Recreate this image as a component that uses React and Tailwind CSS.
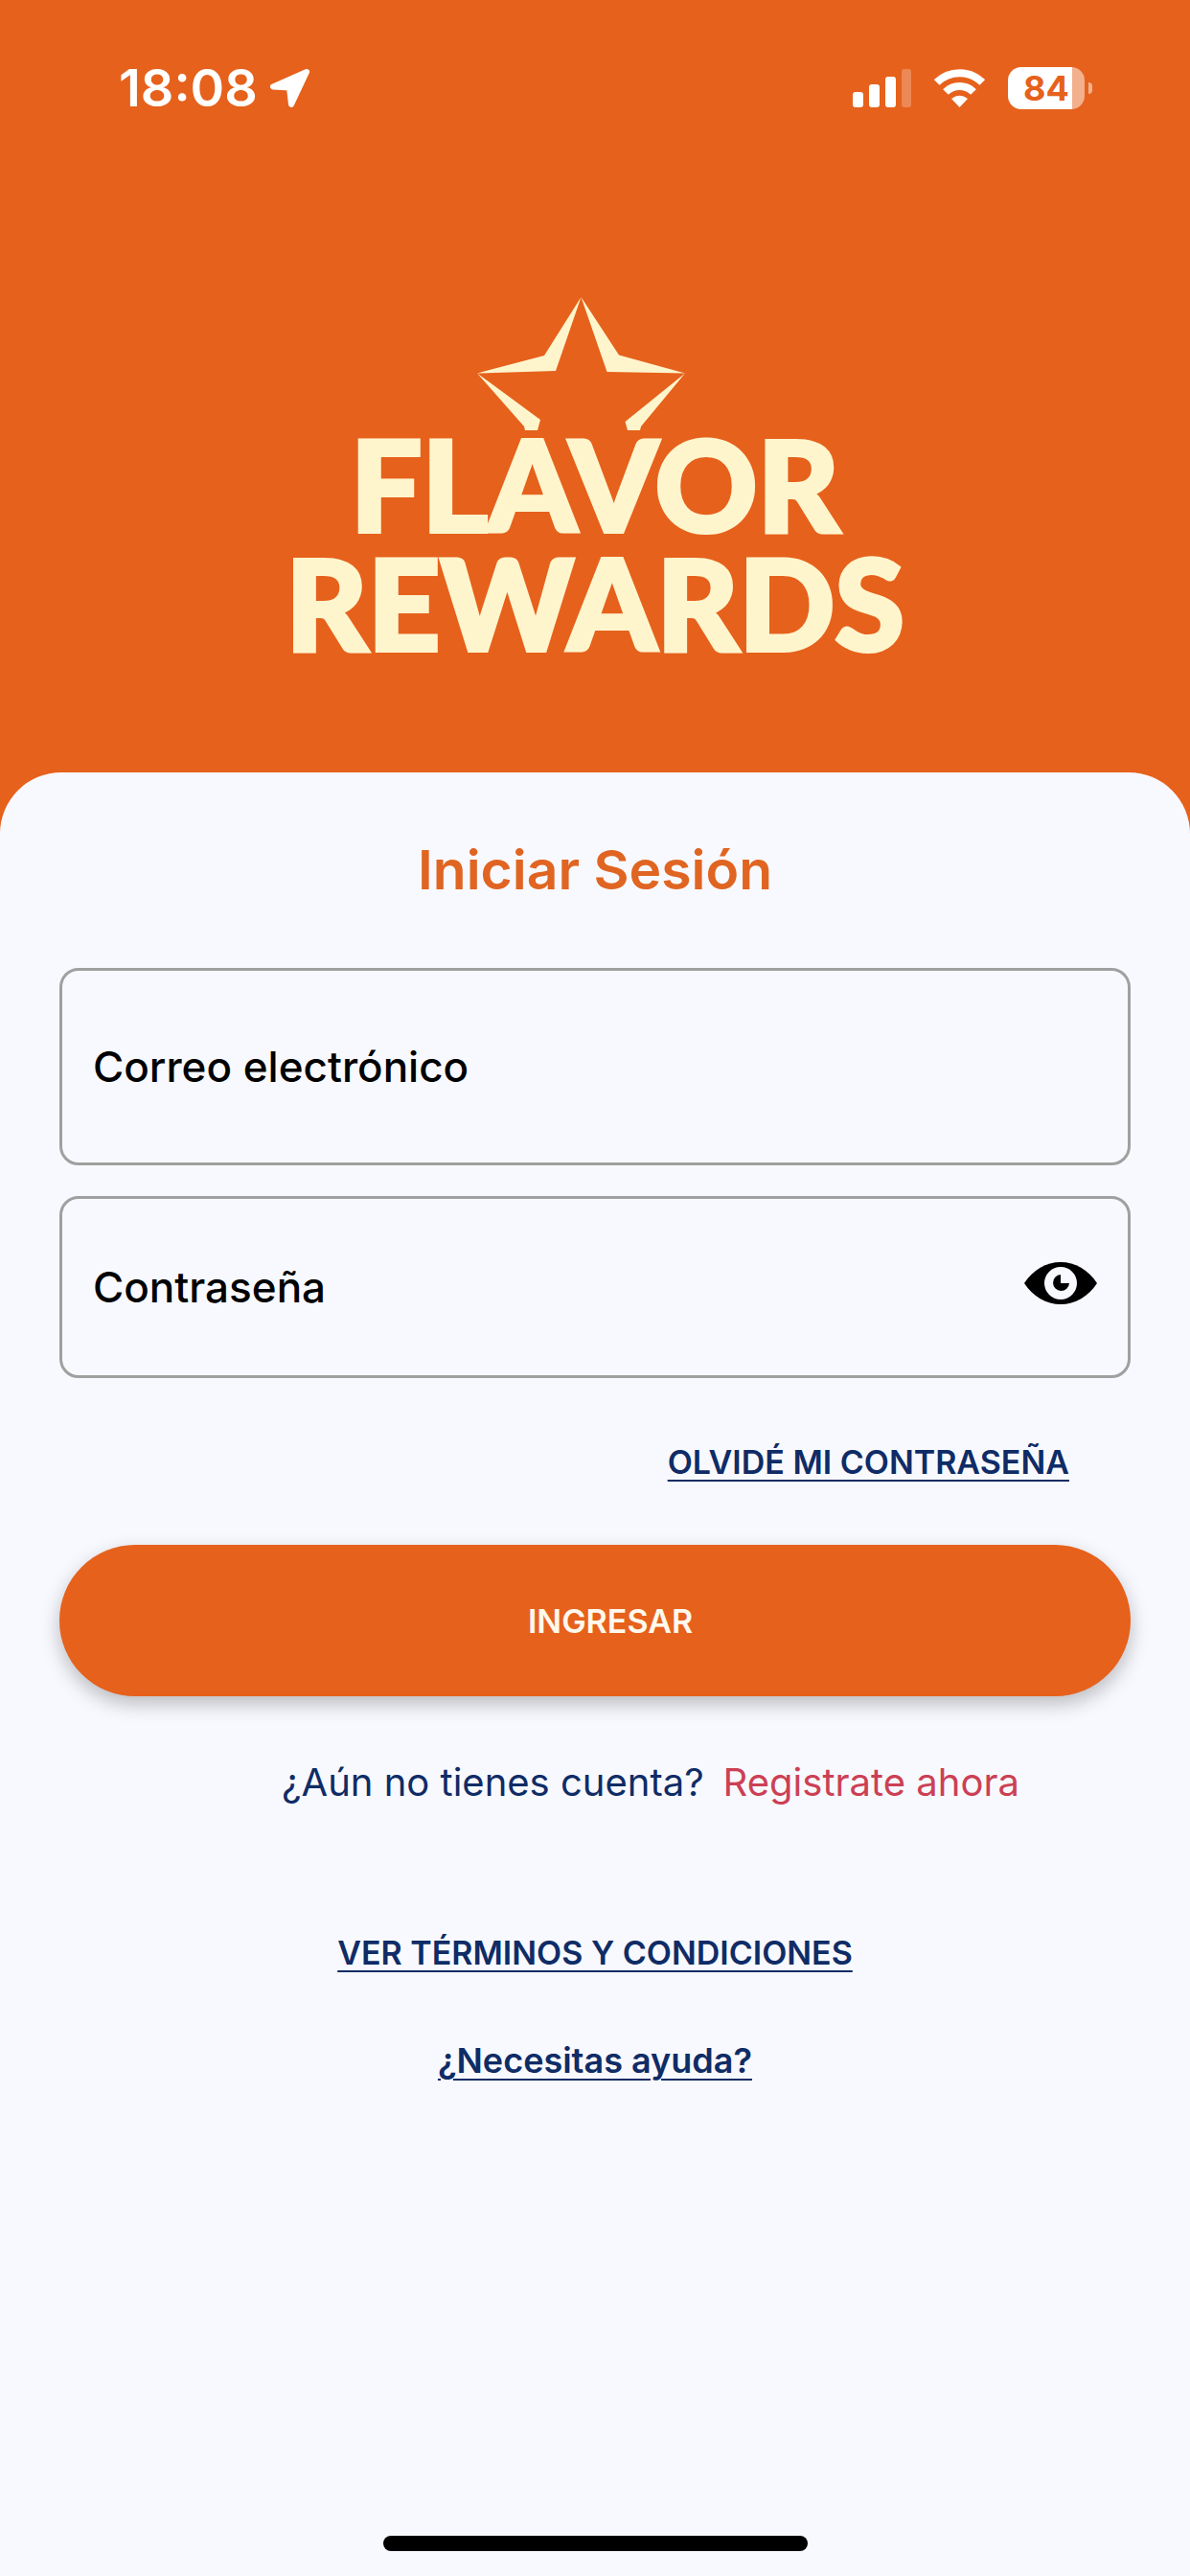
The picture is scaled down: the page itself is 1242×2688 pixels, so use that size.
import { useState } from "react";

const StatusBar = () => {
  return (
    <div className="flex h-16 items-center justify-between pl-[124px] pr-[102px] text-white">
      <div className="flex items-center gap-3">
        <span className="text-[54px] leading-16 font-semibold">18:08</span>
        <svg width="44" height="42" viewBox="0 0 44 42" aria-hidden="true">
          <path
            d="M39 4 L4 19.5 L21 20.5 L23 38 Z"
            fill="currentColor"
            stroke="currentColor"
            strokeWidth="6"
            strokeLinejoin="round"
          />
        </svg>
      </div>

      <div className="flex items-center gap-6">
        <svg
          width="61"
          height="40"
          viewBox="0 0 61 40"
          fill="currentColor"
          aria-hidden="true"
        >
          <rect x="0" y="24" width="11" height="16" rx="3" />
          <rect x="17" y="16" width="11" height="24" rx="3" />
          <rect x="34" y="8" width="11" height="32" rx="3" />
          <rect x="51" y="0" width="10" height="40" rx="3" opacity="0.25" />
        </svg>
        <svg
          width="53"
          height="40"
          viewBox="0 0 53 40"
          fill="none"
          stroke="currentColor"
          strokeWidth="8"
          aria-hidden="true"
        >
          <path d="M2.7 14 A34 34 0 0 1 50.3 14" />
          <path d="M12 24 A20.5 20.5 0 0 1 41 24" />
          <path
            d="M26.5 40 L18 31 Q26.5 24.5 35 31 Z"
            fill="currentColor"
            stroke="none"
          />
        </svg>
        <div className="flex items-center gap-1">
          <div className="flex h-11 w-20 items-center justify-center overflow-hidden rounded-[14px] bg-linear-to-r from-white from-84% to-white/50 to-84% text-4xl font-bold text-[#e6611c]">
            84
          </div>
          <div className="h-3 w-1 rounded-r-full bg-white/50" />
        </div>
      </div>
    </div>
  );
};

const Logo = () => {
  return (
    <div className="flex flex-col items-center text-[#fff5cd]">
      <svg
        width="246"
        height="140"
        viewBox="0 0 246 140"
        fill="currentColor"
        aria-hidden="true"
      >
        <path d="M108.5 0 L82 77 L0 79.5 L70 61 Z" />
        <path d="M108.5 0 L148 60.5 L217 79.5 L135.5 78 Z" />
        <path d="M0 79.5 L66 128 L63 139 L50 139 L49 135 Z" />
        <path d="M217 79.5 L154.5 130 L157 139 L170 139 L171 135 Z" />
      </svg>
      <h1 className="-mt-2 text-center font-['Lato',sans-serif] text-[132px] leading-[124px] font-black [-webkit-text-stroke:4px_#fff5cd]">
        FLAVOR
        <br />
        REWARDS
      </h1>
    </div>
  );
};

const EyeIcon = () => {
  return (
    <svg width="76" height="44" viewBox="0 0 76 44" aria-hidden="true">
      <path
        d="M0 22 C9 8 23 0 38 0 S67 8 76 22 C67 36 53 44 38 44 S9 36 0 22 Z"
        fill="#000"
      />
      <circle cx="38" cy="22" r="17" fill="#f8f9fe" />
      <path d="M38 13 V22 H47 A8.5 8.5 0 1 1 38 13 Z" fill="#000" />
    </svg>
  );
};

const LoginForm = () => {
  const [showPassword, setShowPassword] = useState(false);

  const handleSubmit = (e) => {
    e.preventDefault();
  };

  return (
    <form onSubmit={handleSubmit} className="mt-[70px] flex flex-col">
      <input
        name="email"
        type="email"
        aria-label="Correo electrónico"
        placeholder="Correo electrónico"
        className="h-[206px] w-full rounded-[20px] border-3 border-[#a0a0a0] px-8 text-[44px] font-medium text-black placeholder:text-black"
      />

      <div className="mt-8 flex h-[190px] items-center rounded-[20px] border-3 border-[#a0a0a0] pr-8">
        <input
          name="password"
          type={showPassword ? "text" : "password"}
          aria-label="Contraseña"
          placeholder="Contraseña"
          className="h-full min-w-0 flex-1 px-8 text-[44px] font-medium text-black outline-none placeholder:text-black"
        />
        <button
          type="button"
          aria-label="Mostrar contraseña"
          onClick={() => setShowPassword(!showPassword)}
          className="pb-2"
        >
          <EyeIcon />
        </button>
      </div>

      <a
        href="#"
        className="mt-16 mr-16 self-end text-[34px] leading-12 font-semibold underline decoration-2 underline-offset-6"
      >
        OLVIDÉ MI CONTRASEÑA
      </a>

      <button
        type="submit"
        className="mt-[62px] h-[158px] w-full rounded-full bg-[#e6611c] pl-8 text-[34px] font-semibold text-[#fff8ec] shadow-[0_8px_20px_rgba(0,0,0,0.25)]"
      >
        INGRESAR
      </button>
    </form>
  );
};

const App = () => {
  return (
    <div className="flex min-h-screen flex-col bg-[#e6611c] font-['Inter',sans-serif]">
      <header className="pt-15 pb-[116px]">
        <StatusBar />
        <div className="mt-[186px]">
          <Logo />
        </div>
      </header>

      <main className="flex flex-1 flex-col rounded-t-[64px] bg-[#f8f9fe] px-[62px] pt-[70px] text-[#0f2c66]">
        <h2 className="text-center text-[57px] leading-16 font-semibold text-[#e06522]">
          Iniciar Sesión
        </h2>

        <LoginForm />

        <p className="mt-[66px] pl-[116px] text-center text-[40px] leading-12">
          ¿Aún no tienes cuenta?
          <a href="#" className="ml-5 text-[#cc4054]">
            Registrate ahora
          </a>
        </p>

        <div className="mt-[130px] flex flex-col items-center gap-16 leading-12 font-semibold">
          <a
            href="#"
            className="text-[34px] underline decoration-2 underline-offset-6"
          >
            VER TÉRMINOS Y CONDICIONES
          </a>
          <a
            href="#"
            className="text-4xl leading-12 underline decoration-2 underline-offset-6"
          >
            ¿Necesitas ayuda?
          </a>
        </div>

        <div className="mx-auto mt-auto mb-[26px] h-4 w-[443px] rounded-full bg-black" />
      </main>
    </div>
  );
};

export default App;
